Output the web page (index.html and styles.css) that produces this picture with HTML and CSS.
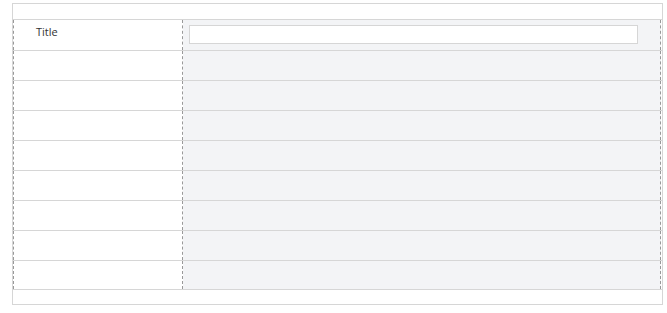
FILE: index.html
```html
<!DOCTYPE html>
<html lang="en">
<head>
    <meta charset="UTF-8">
    <title>Form</title>
    <link rel="stylesheet" href="styles.css">
</head>
<body>
    <div class="panel">
        <div class="grid">
            <div class="row first">
                <div class="label">Title</div>
                <div class="value"><input type="text" class="field"></div>
            </div>
            <div class="row"><div class="label"></div><div class="value"></div></div>
            <div class="row"><div class="label"></div><div class="value"></div></div>
            <div class="row"><div class="label"></div><div class="value"></div></div>
            <div class="row"><div class="label"></div><div class="value"></div></div>
            <div class="row"><div class="label"></div><div class="value"></div></div>
            <div class="row"><div class="label"></div><div class="value"></div></div>
            <div class="row"><div class="label"></div><div class="value"></div></div>
            <div class="row last"><div class="label"></div><div class="value"></div></div>
        </div>
    </div>
</body>
</html>
```

FILE: styles.css
```css
body {
    margin: 0;
    padding: 3px 0 0 12px;
    font-family: "Open Sans", Arial, sans-serif;
    background-color: #fff;
}
.panel {
    width: 649px;
    height: 285px;
    border: 1px solid #d6d6d6;
    padding-top: 15px;
}
.grid {
    width: 649px;
}
.row {
    display: flex;
    height: 29px;
    border-top: 1px solid #d6d6d6;
}
.row.first {
    height: 30px;
}
.row.last {
    height: 28px;
    border-bottom: 1px solid #d6d6d6;
}
.label {
    width: 170px;
    border-left: 1px dashed #999;
    border-right: 1px dashed #999;
    font-size: 11px;
    color: #333;
    padding-left: 22px;
    box-sizing: border-box;
    line-height: 24px;
}
.value {
    flex: 1;
    background-color: #f3f4f6;
    border-right: 1px dashed #999;
    margin-right: 1px;
    padding: 5px 0 0 6px;
    box-sizing: border-box;
}
.field {
    display: block;
    width: 449px;
    height: 19px;
    box-sizing: border-box;
    border: 1px solid #d6d6d6;
    background-color: #fff;
    margin: 0;
    padding: 2px 4px;
}
```
